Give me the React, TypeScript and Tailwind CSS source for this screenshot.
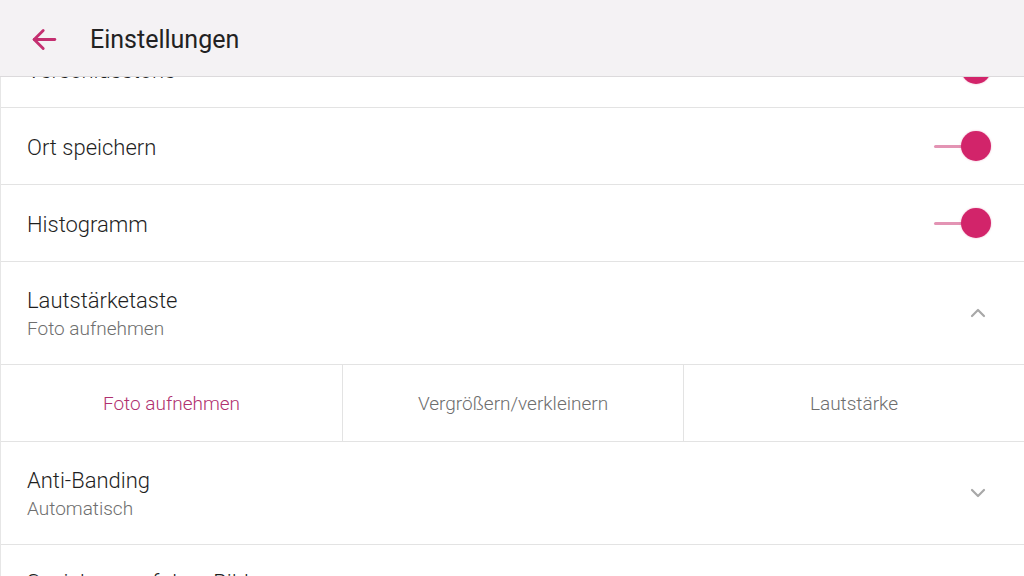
import { ChevronDown, ChevronUp } from "lucide-react";

const font = { fontFamily: "Roboto, 'Noto Sans', sans-serif" };

function Toggle() {
  return (
    <div className="relative w-[60px] h-[30px] flex items-center shrink-0">
      <div className="ml-[3px] w-[40px] h-[3px] rounded-full bg-[#e394b4]" />
      <div className="absolute right-0 top-0 w-[30px] h-[30px] rounded-full bg-[#d2246a] shadow-[0_0_2px_rgba(210,36,106,0.4)]" />
    </div>
  );
}

function ToggleRow({ label, h = "h-[77px]" }: { label: string; h?: string }) {
  return (
    <div className={`${h} flex items-center justify-between pl-[26px] pr-[33px] border-b border-[#e3e3e3]`}>
      <span className="text-[22px] font-light text-[#1f1f1f] pt-[3px]">{label}</span>
      <Toggle />
    </div>
  );
}

function ExpandRow({ title, value, open }: { title: string; value: string; open: boolean }) {
  const Icon = open ? ChevronUp : ChevronDown;
  return (
    <div className="h-[103px] flex items-center justify-between pl-[26px] pr-[34px] border-b border-[#e3e3e3]">
      <div className="flex flex-col pt-[3px]">
        <span className="text-[22px] font-light leading-[28px] text-[#1f1f1f]">{title}</span>
        <span className="text-[19px] font-light leading-[28px] text-[#6e6e6e]">{value}</span>
      </div>
      <Icon size={24} strokeWidth={2.2} className="text-[#a8a8a8]" />
    </div>
  );
}

const OPTIONS = ["Foto aufnehmen", "Vergrößern/verkleinern", "Lautstärke"];

export default function App() {
  return (
    <div className="relative w-[1024px] h-[576px] overflow-hidden bg-white" style={font}>
      {/* scrolled list */}
      <div className="mt-[31px] border-l border-[#e6e6e6]">
        <ToggleRow label="Verschlusstöne" h="h-[77px]" />
        <ToggleRow label="Ort speichern" />
        <ToggleRow label="Histogramm" />
        <ExpandRow title="Lautstärketaste" value="Foto aufnehmen" open />
        <div className="h-[77px] grid grid-cols-3 border-b border-[#e3e3e3]">
          {OPTIONS.map((o, i) => (
            <div
              key={o}
              className={`flex items-center justify-center pt-[2px] text-[19px] font-light ${
                i > 0 ? "border-l border-[#e3e3e3]" : ""
              } ${i === 0 ? "text-[#b0306f]" : "text-[#6e6e6e]"}`}
            >
              {o}
            </div>
          ))}
        </div>
        <ExpandRow title="Anti-Banding" value="Automatisch" open={false} />
        <div className="h-[80px] flex items-start pl-[26px] pt-[21px] border-b border-[#e3e3e3]">
          <span className="text-[22px] font-light text-[#1f1f1f]">Speichern auf dem Bild</span>
        </div>
      </div>

      {/* app bar */}
      <header className="absolute top-0 left-0 right-0 h-[77px] bg-[#f4f2f4] border-b border-[#dcdadc] flex items-center">
        <svg
          width="31"
          height="31"
          viewBox="0 0 24 24"
          className="ml-[29px] mt-[2px]"
          fill="none"
          stroke="#c42f70"
          strokeWidth="2.2"
          strokeLinecap="round"
          strokeLinejoin="round"
        >
          <path d="M20 12H4" />
          <path d="M11 5l-7 7 7 7" />
        </svg>
        <span className="ml-[30px] mt-[3px] text-[25px] text-[#222222]">Einstellungen</span>
      </header>
    </div>
  );
}
